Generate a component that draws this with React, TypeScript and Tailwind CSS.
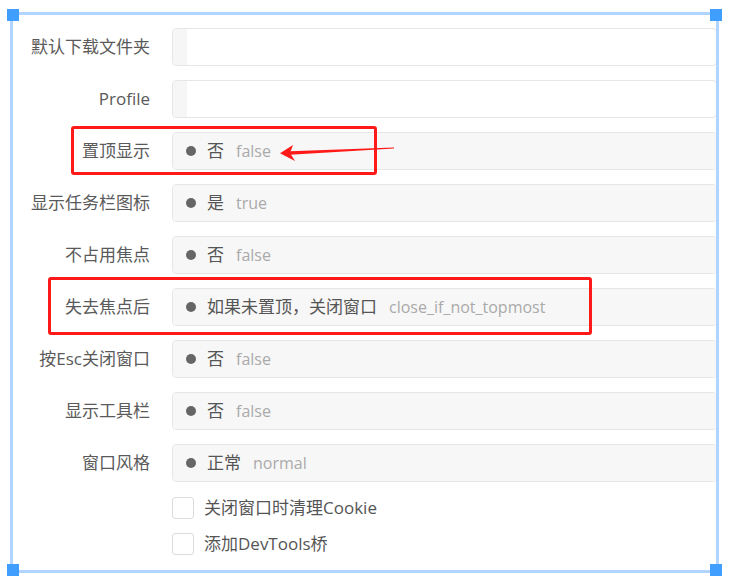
import React from "react";

const FONT = { fontFamily: '"Open Sans", "Noto Sans CJK SC", sans-serif' };

type Row =
  | { label: string; kind: "text" }
  | { label: string; kind: "radio"; value: string; code: string };

const rows: Row[] = [
  { label: "默认下载文件夹", kind: "text" },
  { label: "Profile", kind: "text" },
  { label: "置顶显示", kind: "radio", value: "否", code: "false" },
  { label: "显示任务栏图标", kind: "radio", value: "是", code: "true" },
  { label: "不占用焦点", kind: "radio", value: "否", code: "false" },
  { label: "失去焦点后", kind: "radio", value: "如果未置顶，关闭窗口", code: "close_if_not_topmost" },
  { label: "按Esc关闭窗口", kind: "radio", value: "否", code: "false" },
  { label: "显示工具栏", kind: "radio", value: "否", code: "false" },
  { label: "窗口风格", kind: "radio", value: "正常", code: "normal" },
];

function FormRow({ row }: { row: Row }) {
  return (
    <div className="flex items-center h-[38px]">
      <div className="w-[150px] text-right text-[17px] leading-[24px] text-[#5a5a5a] whitespace-nowrap">
        {row.label}
      </div>
      <div className="ml-[22px] mr-[17px] flex-1 h-[38px] rounded-[4px] border border-[#e6e6e6] overflow-hidden flex items-center">
        {row.kind === "text" ? (
          <div className="h-full w-[14px] bg-[#f6f6f6]" />
        ) : (
          <div className="h-full w-full bg-[#f7f7f7] flex items-center pl-[13px]">
            <span className="w-[10px] h-[10px] rounded-full bg-[#666666]" />
            <span className="ml-[11px] text-[17px] leading-[24px] text-[#555555]">{row.value}</span>
            <span className="ml-[12px] text-[16px] leading-[24px] text-[#aaaaaa]">{row.code}</span>
          </div>
        )}
      </div>
    </div>
  );
}

function CheckRow({ label }: { label: string }) {
  return (
    <div className="flex items-center h-[22px]">
      <span className="w-[22px] h-[22px] rounded-[3px] border border-[#dcdcdc] bg-white" />
      <span className="ml-[10px] text-[17px] leading-[24px] text-[#555555] whitespace-nowrap">{label}</span>
    </div>
  );
}

export default function App() {
  return (
    <div className="relative w-[734px] h-[585px] bg-white overflow-hidden" style={FONT}>
      <div className="pt-[28px] flex flex-col gap-[14px]">
        {rows.map((r, i) => (
          <FormRow key={i} row={r} />
        ))}
      </div>
      <div className="mt-[15px] ml-[172px] flex flex-col gap-[14px]">
        <CheckRow label="关闭窗口时清理Cookie" />
        <CheckRow label="添加DevTools桥" />
      </div>

      {/* selection frame */}
      <div className="absolute left-[10px] top-[12px] w-[709px] h-[561px] border-[3px] border-[#b1d5ff] pointer-events-none" />
      <div className="absolute left-[7px] top-[9px] w-[12px] h-[12px] bg-[#409eff]" />
      <div className="absolute left-[710px] top-[9px] w-[12px] h-[12px] bg-[#409eff]" />
      <div className="absolute left-[7px] top-[564px] w-[12px] h-[12px] bg-[#409eff]" />
      <div className="absolute left-[710px] top-[564px] w-[12px] h-[12px] bg-[#409eff]" />

      {/* annotations */}
      <div className="absolute left-[71px] top-[126px] w-[306px] h-[49px] border-[3px] border-[#ff1a1a] rounded-[3px]" />
      <div className="absolute left-[48px] top-[277px] w-[544px] h-[58px] border-[3px] border-[#ff1a1a] rounded-[3px]" />
      <svg className="absolute left-0 top-0" width="734" height="585" viewBox="0 0 734 585">
        <polygon points="290,151.3 394,147.6 394,148.4 290,154.7" fill="#ff1a1a" />
        <polygon points="280,153.2 293,145 290,153 295,161" fill="#ff1a1a" />
      </svg>
    </div>
  );
}
